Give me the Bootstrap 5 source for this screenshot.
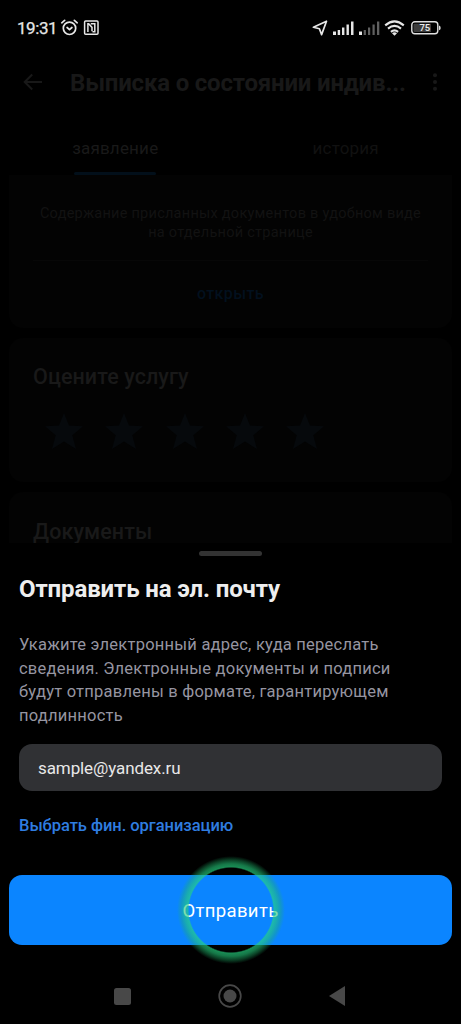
<!DOCTYPE html>
<html lang="ru" data-bs-theme="dark">
<head>
<meta charset="utf-8">
<meta name="viewport" content="width=device-width, initial-scale=1">
<title>Отправить на эл. почту</title>
<link href="https://cdn.jsdelivr.net/npm/bootstrap@5.3.0/dist/css/bootstrap.min.css" rel="stylesheet">
<style>
  body { background: #000; font-family: Roboto, "Noto Sans", sans-serif; color: #e8e8e8; }
  svg { display: block; flex: none; }
  .screen { width: 461px; height: 1024px; }
  .status { height: 55px; padding: 0 20px 0 17px; color: #e6e6e6; }
  .clock { font-size: 17px; font-weight: 400; line-height: 20px; letter-spacing: -.45px; width: 42.5px; white-space: nowrap; -webkit-text-stroke: .25px currentColor; }
  .appbar { height: 55px; padding: 0 20px 0 23px; color: #181818; }
  .appbar h1 { font-size: 24px; font-weight: 700; line-height: 28px; letter-spacing: -.19px; width: 345px; margin: 0 0 0 27px; white-space: nowrap; color: #181818; }
  .tab-row { height: 65px; font-size: 17px; line-height: 20px; letter-spacing: .2px; }
  .tab-item { padding-top: 28px; color: #111; }
  .tab-item.current { color: #191919; }
  .tab-item.current::after { content: ""; width: 82px; height: 3px; margin-top: 14px; border-radius: 2px; background: #020f1a; }
  .panels { height: 368px; padding: 0 9px; }
  .panel { background: #030303; border-radius: 14px; flex: none; }
  .panel-docs { height: 153px; border-radius: 0 0 14px 14px; padding: 29px 24px 0; }
  .panel-docs p { font-size: 14.5px; line-height: 19px; letter-spacing: .26px; color: #121212; margin: 0; white-space: nowrap; }
  .panel-docs .rule { height: 1px; background: #070707; margin-top: 18px; }
  .panel-docs .open-link { font-size: 16px; font-weight: 500; line-height: 20px; letter-spacing: .4px; color: #02101e; margin-top: 23px; }
  .panel-rate { height: 144px; padding: 26px 24px 0; }
  .panel-list { height: 80px; padding: 27px 24px 0; }
  .panel h2 { font-size: 21.5px; font-weight: 500; line-height: 26px; color: #191919; margin: 0; letter-spacing: .08px; }
  .stars { color: #06090c; margin: 22px 0 0 11px; gap: 20.3px; }
  .sheet { height: 332px; padding: 8px 19px 0; background: #000; }
  .grip { width: 63px; height: 5px; border-radius: 3px; background: #333; }
  .sheet h2 { font-size: 24px; font-weight: 700; line-height: 28px; letter-spacing: -.12px; color: #eee; margin: 19px 0 0; white-space: nowrap; }
  .sheet p { font-size: 16.5px; line-height: 23.5px; letter-spacing: .23px; color: #9695a1; margin: 30px 0 0; white-space: nowrap; }
  .mail { height: 47px; border-radius: 13px; background: #303134; color: #e8e8e8; font-size: 17px; letter-spacing: -.1px; padding: 2px 19px 0; margin-top: 17px; }
  .org { font-size: 16.5px; font-weight: 500; line-height: 20px; letter-spacing: -.04px; color: #2f7de0; margin-top: 25px; white-space: nowrap; }
  .send-wrap { height: 70px; padding: 0 9px; }
  .send, .send:hover { height: 70px; border-radius: 13px; background: #0b85ff; color: #fff; font-size: 18.5px; letter-spacing: .35px; padding-top: 10px; border: 0; }
  .touch { position: absolute; left: 50%; top: 50%; width: 110px; height: 110px; transform: translate(-50%, -50%); border-radius: 50%; pointer-events: none;
    background: radial-gradient(circle closest-side, transparent 76%, rgba(38,212,128,.66) 78.5%, rgba(36,200,120,.6) 84%, rgba(30,180,105,.36) 91%, transparent 98%); }
  .navkeys { height: 79px; padding: 23px 115px 0 114px; color: #484848; }
</style>
</head>
<body>
<div class="screen d-flex flex-column overflow-hidden">
  <header class="status d-flex align-items-center justify-content-between flex-shrink-0">
    <div class="d-flex align-items-center">
      <span class="clock">19:31</span>
      <svg width="18" height="18" viewBox="0 0 18 18" fill="none" stroke="currentColor" stroke-width="1.7" stroke-linecap="round" stroke-linejoin="round"><circle cx="9.500" cy="9.300" r="6.200"/><path d="M1.800 3.800 4.600 1.400M17.200 3.800 14.400 1.400M7.100 8.500 9.500 10.700l2.400-2.200"/></svg>
      <svg class="ms-1" width="18" height="18" viewBox="0 0 18 18" fill="none" stroke="currentColor"><rect x="2.600" y="1.900" width="13.400" height="13.400" rx="1" stroke-width="1.500"/><path d="M5.900 13V4.800h.8L10 8.400v3.800M8.800 4.700h4v8h-2.300" stroke-width="1.500"/></svg>
    </div>
    <div class="d-flex align-items-center">
      <svg width="16" height="16" viewBox="0 0 16 16" fill="none" stroke="currentColor" stroke-width="1.7" stroke-linejoin="round"><path d="M14.500 1.200 1.400 7.300l6 1.500 2.200 5.800z"/></svg>
      <svg style="margin-left:5px" width="21" height="14" viewBox="0 0 21 14" fill="currentColor"><path d="M0 10.500h3V14H0zM4.700 9h2.400v5H4.700zM9 6.500h2.400V14H9zM13.500 3.500h2.400V14h-2.400zM18 .5h2.500V14H18z"/></svg>
      <svg style="margin-left:5px" width="21" height="14" viewBox="0 0 21 14" fill="#606060"><path fill="#e6e6e6" d="M0 10.500h3V14H0z"/><path d="M4.700 9h2.200v5H4.700zM9 6.500h2.200V14H9zM13.500 3.500h2.200V14h-2.200zM18 .5h2.300V14H18z"/></svg>
      <svg style="margin-left:4px" width="21" height="16" viewBox="0 0 21 16" fill="none" stroke="currentColor" stroke-width="2.100"><path d="M1.200 5.400Q10.500-2.500 19.800 5.400M4 8.600q6.500-5.300 13 0M6.900 11.800q3.600-2.800 7.200 0"/><path fill="currentColor" stroke="none" d="m8 13.200 2.500 2.500 2.500-2.500q-2.500-1.800-5 0z"/></svg>
      <svg style="margin-left:6px" width="30" height="14" viewBox="0 0 30 14"><rect x=".8" y=".8" width="26" height="12" rx="3" fill="none" stroke="#e0e0e0" stroke-width="1.400"/><path d="M3.500 2.700H20v8.200H3.500a1 1 0 0 1-1-1V3.700a1 1 0 0 1 1-1z" fill="#3c3c3c"/><path d="M28 4.500q1.700.5 1.700 2.400T28 9.300z" fill="#ddd"/><text x="13.800" y="10.300" text-anchor="middle" font-family="Roboto, sans-serif" font-size="9.500" font-weight="500" fill="#eee">75</text></svg>
    </div>
  </header>

  <div class="appbar d-flex align-items-center flex-shrink-0">
    <svg width="20" height="20" viewBox="0 0 20 20" fill="none" stroke="currentColor" stroke-width="2"><path d="M19 9H2M9.200 1.500 1.700 9l7.500 7.500"/></svg>
    <h1>Выписка о состоянии индив...</h1>
    <svg class="ms-auto" width="10" height="20" viewBox="0 0 10 20" fill="currentColor"><circle cx="4" cy="2.200" r="2"/><circle cx="4" cy="9" r="2"/><circle cx="4" cy="15.800" r="2"/></svg>
  </div>

  <div class="tab-row row g-0 flex-shrink-0">
    <div class="tab-item current col-6 d-flex flex-column align-items-center">заявление</div>
    <div class="tab-item col-6 d-flex flex-column align-items-center">история</div>
  </div>

  <main class="panels d-flex flex-column overflow-hidden flex-shrink-0">
    <section class="panel panel-docs text-center">
      <p>Содержание присланных документов в удобном виде<br>на отдельной странице</p>
      <div class="rule"></div>
      <div class="open-link">открыть</div>
    </section>
    <section class="panel panel-rate" style="margin-top:10px">
      <h2>Оцените услугу</h2>
      <div class="stars d-flex">
        <svg width="40" height="40" viewBox="0 0 40 40" fill="currentColor"><path d="m20 1 5 12.500 14 .8-10.700 9 3.700 13.700L20 29.500 8 37l3.700-13.700L1 14.300l14-.8z"/></svg>
        <svg width="40" height="40" viewBox="0 0 40 40" fill="currentColor"><path d="m20 1 5 12.500 14 .8-10.700 9 3.700 13.700L20 29.500 8 37l3.700-13.700L1 14.300l14-.8z"/></svg>
        <svg width="40" height="40" viewBox="0 0 40 40" fill="currentColor"><path d="m20 1 5 12.500 14 .8-10.700 9 3.700 13.700L20 29.500 8 37l3.700-13.700L1 14.300l14-.8z"/></svg>
        <svg width="40" height="40" viewBox="0 0 40 40" fill="currentColor"><path d="m20 1 5 12.500 14 .8-10.700 9 3.700 13.700L20 29.500 8 37l3.700-13.700L1 14.300l14-.8z"/></svg>
        <svg width="40" height="40" viewBox="0 0 40 40" fill="currentColor"><path d="m20 1 5 12.500 14 .8-10.700 9 3.700 13.700L20 29.500 8 37l3.700-13.700L1 14.300l14-.8z"/></svg>
      </div>
    </section>
    <section class="panel panel-list" style="margin-top:10px"><h2>Документы</h2></section>
  </main>

  <section class="sheet flex-shrink-0">
    <div class="grip mx-auto"></div>
    <h2>Отправить на эл. почту</h2>
    <p>Укажите электронный адрес, куда переслать<br>сведения. Электронные документы и подписи<br>будут отправлены в формате, гарантирующем<br>подлинность</p>
    <div class="mail d-flex align-items-center">sample@yandex.ru</div>
    <div class="org">Выбрать фин. организацию</div>
  </section>

  <div class="send-wrap position-relative flex-shrink-0">
    <button type="button" class="send btn w-100">Отправить</button>
    <span class="touch"></span>
  </div>

  <nav class="navkeys d-flex justify-content-between align-items-start flex-shrink-0 position-relative">
    <svg width="17" height="17" viewBox="0 0 17 17" style="margin-top:20px" fill="currentColor"><rect width="17" height="17" rx="2.500"/></svg>
    <svg width="24" height="24" viewBox="0 0 24 24" style="margin-top:16px" fill="currentColor"><circle cx="12" cy="12" r="6.500"/><circle cx="12" cy="12" r="10.800" fill="none" stroke="currentColor" stroke-width="1.700"/></svg>
    <svg width="17" height="20" viewBox="0 0 17 20" style="margin-top:18px" fill="currentColor"><path d="M16 0v20L0 10z"/></svg>
  </nav>
</div>
<script src="https://cdn.jsdelivr.net/npm/bootstrap@5.3.0/dist/js/bootstrap.bundle.min.js"></script>
</body>
</html>
